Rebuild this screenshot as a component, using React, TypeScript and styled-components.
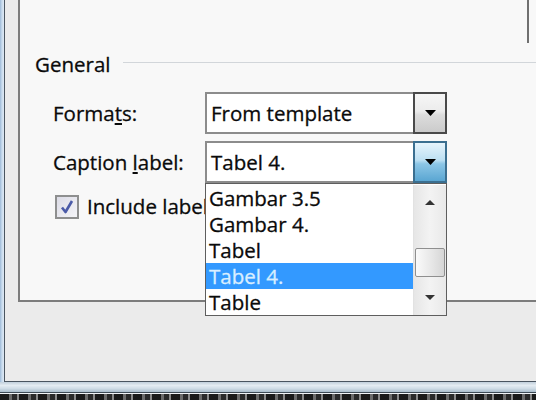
import React from "react";
import styled, { createGlobalStyle } from "styled-components";

const GlobalStyle = createGlobalStyle`
  html, body { margin: 0; padding: 0; background: #ececec; }
  body { font-family: "Open Sans", "Noto Sans", sans-serif; color: #0a0a0a; }
  * { box-sizing: border-box; }
`;

const Screen = styled.div`
  width: 536px;
  height: 400px;
  overflow: hidden;
  display: flex;
  flex-direction: column;
  background: #ececec;
  font-size: 20.5px;
  -webkit-text-stroke: 0.3px currentColor;
`;

const Main = styled.div`
  display: flex;
  height: 382px;
`;

const WindowEdge = styled.div`
  width: 4px;
  background: linear-gradient(90deg, #9dbad8 0%, #c9dbed 50%, #dfe9f3 100%);
`;

const Dialog = styled.div`
  flex: 1;
  display: flex;
  border-left: 1px solid #4a5560;
  border-bottom: 1px solid #4a5560;
  padding: 0 0 79px 13px;
  background: #ebebeb;
`;

const TabPage = styled.div`
  flex: 1;
  display: flex;
  flex-direction: column;
  background: #f8f8f8;
  border-left: 2px solid #7c7c7c;
  border-bottom: 2px solid #7c7c7c;
`;

const PreviewRow = styled.div`
  height: 44px;
  display: flex;
  justify-content: flex-end;
  padding-right: 7px;
`;

const PreviewEdge = styled.div`
  width: 2px;
  height: 43px;
  background: #707070;
`;

const GroupHeader = styled.div`
  display: flex;
  align-items: center;
  padding-left: 15px;
  margin-top: 7px;
  line-height: 27px;
`;

const GroupLine = styled.div`
  flex: 1;
  height: 1px;
  margin-left: 13px;
  margin-top: -5px;
  background: #d2d6da;
`;

const Form = styled.div`
  display: flex;
  flex-direction: column;
  gap: 7px;
  padding-left: 33px;
  margin-top: 14px;
`;

const Row = styled.div`
  display: flex;
  align-items: center;
`;

const Label = styled.div`
  width: 152px;
  line-height: 27px;
  white-space: nowrap;
`;

const ComboWrap = styled.div`
  position: relative;
  width: 242px;
`;

const Combo = styled.div`
  display: flex;
  height: 42px;
  background: #fff;
  border: 2px solid #8c8c8c;
`;

const ComboText = styled.div`
  flex: 1;
  padding-left: 4px;
  line-height: 38px;
  white-space: nowrap;
`;

const DropButton = styled.div<{ $active?: boolean }>`
  width: 34px;
  margin: -2px -2px -2px 0;
  display: flex;
  align-items: center;
  justify-content: center;
  border: 2px solid ${(p) => (p.$active ? "#3b6f90" : "#4a4a4a")};
  background: ${(p) =>
    p.$active
      ? "linear-gradient(180deg, #e6f4fc 0%, #bde0f3 45%, #8cc6e6 55%, #5aa6d2 100%)"
      : "linear-gradient(180deg, #f6f6f6 0%, #ececec 45%, #dcdcdc 55%, #cbcbcb 100%)"};
`;

const CheckRow = styled.div`
  display: flex;
  align-items: center;
  gap: 8px;
  padding-left: 2px;
  margin-top: 3px;
  line-height: 27px;
  white-space: nowrap;
`;

const CheckLabel = styled.div`
  width: 118px;
  overflow: hidden;
`;

const CheckBox = styled.div`
  width: 24px;
  height: 24px;
  border: 2px solid #8e8f8f;
  background: linear-gradient(135deg, #dcdce6 0%, #f4f4f8 100%);
  display: flex;
  align-items: center;
  justify-content: center;
`;

const ListPopup = styled.div`
  position: absolute;
  left: 0;
  top: 100%;
  width: 242px;
  height: 133px;
  display: flex;
  background: #fff;
  border: 1px solid #5e5e5e;
  padding-top: 1px;
  z-index: 5;
`;

const Items = styled.div`
  flex: 1;
  display: flex;
  flex-direction: column;
`;

const Item = styled.div<{ $selected?: boolean }>`
  height: 26px;
  line-height: 26px;
  padding-left: 3px;
  white-space: nowrap;
  background: ${(p) => (p.$selected ? "#3399ff" : "transparent")};
  color: ${(p) => (p.$selected ? "#d9eeff" : "#0a0a0a")};
`;

const ScrollBar = styled.div`
  width: 33px;
  display: flex;
  flex-direction: column;
  background: linear-gradient(90deg, #e6e6e6 0%, #f3f3f3 50%, #e9e9e9 100%);
  border-left: 1px solid #e2e2e2;
`;

const ScrollArrow = styled.div`
  height: 34px;
  display: flex;
  align-items: center;
  justify-content: center;
`;

const TrackGap = styled.div<{ $h: number }>`
  height: ${(p) => p.$h}px;
`;

const Thumb = styled.div`
  height: 29px;
  margin: 0 1px;
  border: 1px solid #8f8f8f;
  border-radius: 2px;
  background: linear-gradient(90deg, #fafafa 0%, #e9e9e9 50%, #d6d6d6 100%);
`;

const GlassBar = styled.div`
  height: 11px;
  background: linear-gradient(180deg, #c2d0dc 0%, #e4ecf2 35%, #cfdce6 65%, #a9bccb 100%);
  border-bottom: 1px solid #3e4b56;
`;

const WhiteLine = styled.div`
  height: 1px;
  background: #f2f5f8;
`;

const Strip = styled.div`
  flex: 1;
  background: repeating-linear-gradient(90deg, #1a1a1a 0px, #1a1a1a 9px, #6c6c6c 9px, #6c6c6c 12px, #2a2a2a 12px, #2a2a2a 17px, #8a8a8a 17px, #8a8a8a 19px);
`;

const Tri = ({ dir, w, h, color }: { dir: "up" | "down"; w: number; h: number; color: string }) => (
  <svg width={w} height={h} viewBox={`0 0 ${w} ${h}`}>
    <polygon points={dir === "down" ? `0,0 ${w},0 ${w / 2},${h}` : `0,${h} ${w},${h} ${w / 2},0`} fill={color} />
  </svg>
);

const Check = () => (
  <svg width="16" height="16" viewBox="0 0 16 16">
    <path d="M3 8.5 L6.5 13 L13 2" fill="none" stroke="#4a5aa8" strokeWidth="2.6" strokeLinejoin="round" />
  </svg>
);

const options = ["Gambar 3.5", "Gambar 4.", "Tabel", "Tabel 4.", "Table"];

export default function App() {
  return (
    <>
      <GlobalStyle />
      <Screen>
        <Main>
          <WindowEdge />
          <Dialog>
            <TabPage>
              <PreviewRow>
                <PreviewEdge />
              </PreviewRow>
              <GroupHeader>
                General
                <GroupLine />
              </GroupHeader>
              <Form>
                <Row>
                  <Label>
                    Forma<u>t</u>s:
                  </Label>
                  <ComboWrap>
                    <Combo>
                      <ComboText>From template</ComboText>
                      <DropButton>
                        <Tri dir="down" w={11} h={6} color="#000" />
                      </DropButton>
                    </Combo>
                  </ComboWrap>
                </Row>
                <Row>
                  <Label>
                    Caption <u>l</u>abel:
                  </Label>
                  <ComboWrap>
                    <Combo>
                      <ComboText>Tabel 4.</ComboText>
                      <DropButton $active>
                        <Tri dir="down" w={11} h={6} color="#000" />
                      </DropButton>
                    </Combo>
                    <ListPopup>
                      <Items>
                        {options.map((o) => (
                          <Item key={o} $selected={o === "Tabel 4."}>
                            {o}
                          </Item>
                        ))}
                      </Items>
                      <ScrollBar>
                        <ScrollArrow>
                          <Tri dir="up" w={10} h={5} color="#333" />
                        </ScrollArrow>
                        <TrackGap $h={29} />
                        <Thumb />
                        <TrackGap $h={3} />
                        <ScrollArrow>
                          <Tri dir="down" w={10} h={5} color="#333" />
                        </ScrollArrow>
                      </ScrollBar>
                    </ListPopup>
                  </ComboWrap>
                </Row>
                <CheckRow>
                  <CheckBox>
                    <Check />
                  </CheckBox>
                  <CheckLabel>Include label and number</CheckLabel>
                </CheckRow>
              </Form>
            </TabPage>
          </Dialog>
        </Main>
        <GlassBar />
        <WhiteLine />
        <Strip />
      </Screen>
    </>
  );
}
